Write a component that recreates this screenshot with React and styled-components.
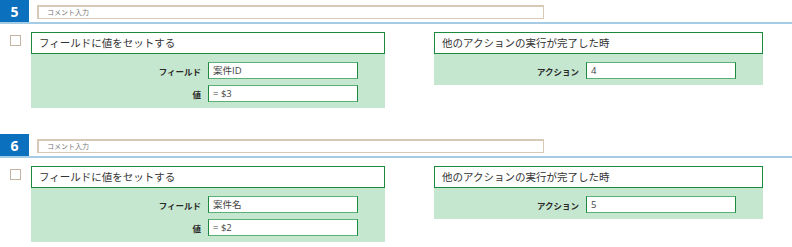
import React from "react";
import styled, { createGlobalStyle } from "styled-components";

const GlobalStyle = createGlobalStyle`
  html, body {
    margin: 0;
    padding: 0;
    background: #fff;
    font-family: "Open Sans", "Noto Sans CJK JP", sans-serif;
    color: #333;
  }
`;

const steps = [
  {
    no: 5,
    action: "フィールドに値をセットする",
    fields: [
      { label: "フィールド", value: "案件ID" },
      { label: "値", value: "= $3" },
    ],
    trigger: "他のアクションの実行が完了した時",
    after: "4",
  },
  {
    no: 6,
    action: "フィールドに値をセットする",
    fields: [
      { label: "フィールド", value: "案件名" },
      { label: "値", value: "= $2" },
    ],
    trigger: "他のアクションの実行が完了した時",
    after: "5",
  },
];

const App = () => {
  return (
    <>
      <GlobalStyle />
      <Page>
        {steps.map((s) => (
          <Block key={s.no}>
            <StepBar>
              <Badge>{s.no}</Badge>
              <Comment placeholder="コメント入力" />
            </StepBar>
            <Row>
              <Check />
              <Card wide>
                <CardHead>{s.action}</CardHead>
                <CardBody>
                  {s.fields.map((f) => (
                    <React.Fragment key={f.label}>
                      <Label>{f.label}</Label>
                      <Field>{f.value}</Field>
                    </React.Fragment>
                  ))}
                </CardBody>
              </Card>
              <Card>
                <CardHead>{s.trigger}</CardHead>
                <CardBody>
                  <Label>アクション</Label>
                  <Field>{s.after}</Field>
                </CardBody>
              </Card>
            </Row>
          </Block>
        ))}
      </Page>
    </>
  );
};

const Page = styled.div`
  width: 792px;
  height: 247px;
  overflow: hidden;
  display: flex;
  flex-direction: column;
`;

const Block = styled.section`
  display: flex;
  flex-direction: column;
  flex-shrink: 0;
  margin-bottom: 26px;
`;

const StepBar = styled.div`
  display: flex;
  align-items: center;
  height: 22px;
  border-bottom: 2px solid #a6cbe5;
`;

const Badge = styled.div`
  width: 29px;
  height: 22px;
  background: #0b70bd;
  color: #fff;
  font-weight: 700;
  font-size: 14px;
  display: flex;
  align-items: center;
  justify-content: center;
`;

const Comment = styled.div`
  margin-left: 8px;
  margin-top: 1px;
  width: 496px;
  height: 11px;
  border: 1px solid #d8c9b6;
  border-top-width: 2px;
  border-left-width: 2px;
  background: #fff;
  font-size: 7px;
  line-height: 11px;
  color: #777;
  padding-left: 8px;
  box-sizing: content-box;
  font-family: "Noto Sans CJK JP", sans-serif;
  &::before {
    content: attr(placeholder);
  }
`;

const Row = styled.div`
  display: flex;
  align-items: flex-start;
  padding-top: 8px;
`;

const Check = styled.div`
  width: 9px;
  height: 9px;
  margin: 3px 0 0 10px;
  border: 1px solid #c4b4a4;
  background: #fff;
`;

const Card = styled.div`
  display: flex;
  flex-direction: column;
  width: ${(props) => (props.wide ? "354px" : "329px")};
  margin-left: ${(props) => (props.wide ? "10px" : "49px")};
`;

const CardHead = styled.div`
  height: 20px;
  border: 1px solid #1b8a3d;
  background: #fff;
  font-size: 10.5px;
  line-height: 20px;
  padding-left: 7px;
  color: #333;
  font-family: "Noto Sans CJK JP", sans-serif;
`;

const CardBody = styled.div`
  display: grid;
  grid-template-columns: 1fr 150px;
  column-gap: 7px;
  row-gap: 6px;
  align-items: center;
  padding: 8px 27px 6px 0;
  background: #c5e6cf;
`;

const Label = styled.div`
  text-align: right;
  font-size: 8.5px;
  font-weight: 700;
  color: #2a2a2a;
  font-family: "Noto Sans CJK JP", sans-serif;
`;

const Field = styled.div`
  height: 15px;
  border: 1px solid #1b8a3d;
  border-top-color: #5db075;
  border-bottom-color: #5db075;
  background: #fff;
  font-size: 9.5px;
  line-height: 15px;
  padding-left: 4px;
  color: #444;
  font-family: "Open Sans", "Noto Sans CJK JP", sans-serif;
`;

export default App;
